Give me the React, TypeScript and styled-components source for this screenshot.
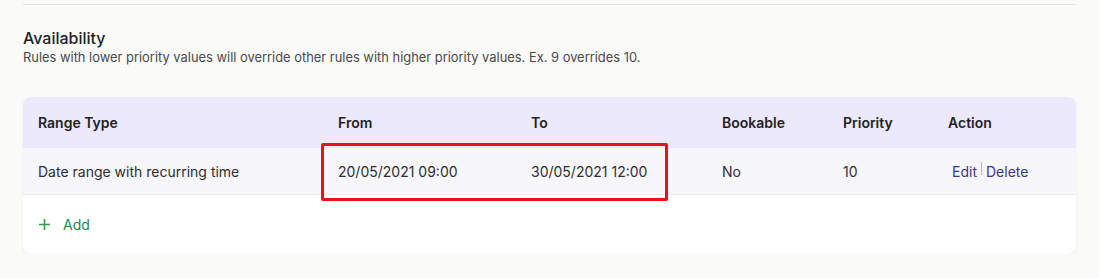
import React from 'react';
import styled, { createGlobalStyle } from 'styled-components';

interface AvailabilityRule {
  rangeType: string;
  from: string;
  to: string;
  bookable: string;
  priority: number;
}

const GlobalStyle = createGlobalStyle`
  html, body {
    margin: 0;
    padding: 0;
    background: #fafaf9;
  }
  body {
    font-family: Inter, 'Noto Sans', 'Liberation Sans', sans-serif;
    color: #2b2b2b;
    -webkit-font-smoothing: antialiased;
  }
`;

const Page = styled.div`
  padding: 4px 23px 0 23px;
  width: 1053px;
`;

const Divider = styled.hr`
  margin: 0;
  border: 0;
  border-top: 1px solid #e4e4e2;
`;

const Section = styled.section`
  padding-top: 23px;
`;

const Title = styled.h2`
  margin: 0;
  font-size: 16px;
  line-height: 20px;
  font-weight: 500;
  color: #1f1f1f;
`;

const Subtitle = styled.p`
  margin: 1px 0 0;
  font-size: 12.9px;
  line-height: 18px;
  color: #4a4a4a;
`;

const Card = styled.div`
  position: relative;
  margin-top: 30px;
  background: #ffffff;
  border-radius: 8px;
  overflow: hidden;
  box-shadow: 0 1px 2px rgba(0, 0, 0, 0.08);
`;

const Row = styled.div<{ $variant: 'head' | 'body' }>`
  display: grid;
  grid-template-columns: 300px 193px 191px 121px 105px 1fr;
  align-items: center;
  height: ${({ $variant }) => ($variant === 'head' ? '51px' : '46px')};
  background: ${({ $variant }) => ($variant === 'head' ? '#ede9fc' : '#f7f6fb')};
  border-bottom: ${({ $variant }) =>
    $variant === 'body' ? '1px solid #ebebeb' : 'none'};
`;

const Cell = styled.div<{ $head?: boolean }>`
  padding-left: 15px;
  font-size: 14px;
  font-weight: ${({ $head }) => ($head ? 600 : 400)};
  color: ${({ $head }) => ($head ? '#222222' : '#2e2e2e')};
  white-space: nowrap;
`;

const Actions = styled.div`
  display: flex;
  align-items: center;
  padding-left: 15px;
`;

const LinkButton = styled.button`
  border: 0;
  background: none;
  padding: 0 4px;
  font: inherit;
  font-size: 14px;
  color: #3d3583;
  cursor: pointer;
`;

const Separator = styled.span`
  width: 1px;
  height: 13px;
  margin-top: -6px;
  background: #b8b8c4;
`;

const AddRow = styled.div`
  display: flex;
  align-items: center;
  gap: 12px;
  height: 59px;
  padding-left: 15px;
  color: #23884a;
  font-size: 14px;
`;

const Highlight = styled.div`
  position: absolute;
  left: 298px;
  top: 46px;
  width: 341px;
  height: 52px;
  border: 3px solid #ee1111;
  border-radius: 2px;
  pointer-events: none;
`;

const rules: AvailabilityRule[] = [
  {
    rangeType: 'Date range with recurring time',
    from: '20/05/2021 09:00',
    to: '30/05/2021 12:00',
    bookable: 'No',
    priority: 10,
  },
];

const headers = ['Range Type', 'From', 'To', 'Bookable', 'Priority', 'Action'];

const PlusIcon: React.FC = () => (
  <svg width="13" height="13" viewBox="0 0 13 13" fill="none">
    <path d="M6.5 1v11M1 6.5h11" stroke="#2e9e4a" strokeWidth="1.6" />
  </svg>
);

const App: React.FC = () => {
  return (
    <>
      <GlobalStyle />
      <Page>
        <Divider />
        <Section>
          <Title>Availability</Title>
          <Subtitle>
            Rules with lower priority values will override other rules with
            higher priority values. Ex. 9 overrides 10.
          </Subtitle>
          <Card>
            <Row $variant="head">
              {headers.map(h => (
                <Cell key={h} $head>
                  {h}
                </Cell>
              ))}
            </Row>
            {rules.map(rule => (
              <Row $variant="body" key={rule.from}>
                <Cell>{rule.rangeType}</Cell>
                <Cell>{rule.from}</Cell>
                <Cell>{rule.to}</Cell>
                <Cell>{rule.bookable}</Cell>
                <Cell>{rule.priority}</Cell>
                <Actions>
                  <LinkButton>Edit</LinkButton>
                  <Separator />
                  <LinkButton>Delete</LinkButton>
                </Actions>
              </Row>
            ))}
            <AddRow>
              <PlusIcon />
              Add
            </AddRow>
            <Highlight />
          </Card>
        </Section>
      </Page>
    </>
  );
};

export default App;
